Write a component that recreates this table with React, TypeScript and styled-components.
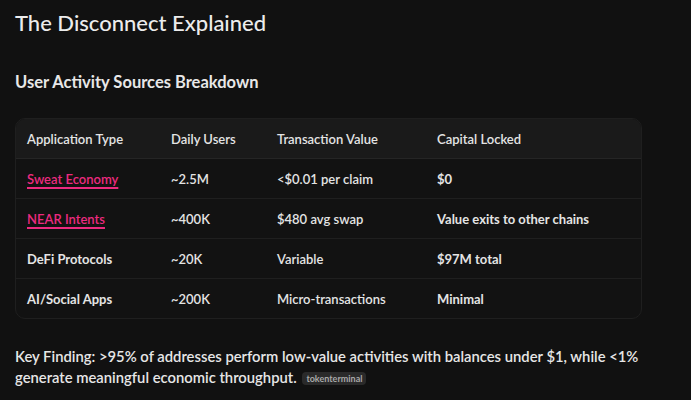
import React from "react";
import styled, { createGlobalStyle } from "styled-components";

const Global = createGlobalStyle`
  html, body { margin: 0; padding: 0; background: #111111; }
  body { font-family: Lato, "Noto Sans", sans-serif; color: #e6e6e6; }
`;

const Page = styled.div`
  padding: 8px 15px 0 15px;
  width: 691px;
  box-sizing: border-box;
`;

const Title = styled.h1`
  margin: 0;
  font-size: 22px;
  line-height: 30px;
  font-weight: 500;
  color: #ececec;
`;

const Subtitle = styled.h2`
  margin: 33px 0 0 0;
  font-size: 16.5px;
  line-height: 22px;
  font-weight: 700;
  color: #e8e8e8;
`;

const TableWrap = styled.div`
  margin-top: 25px;
  width: 625px;
  border: 1px solid #1f1f1f;
  border-radius: 10px;
  overflow: hidden;
  background: #121212;
`;

const Table = styled.table`
  width: 100%;
  border-collapse: collapse;
  font-size: 13px;
`;

const HeadCell = styled.th`
  text-align: left;
  font-weight: 600;
  color: #e4e4e4;
  background: #1a1a1a;
  height: 39px;
  padding: 0 0 0 11px;
  border-bottom: 1px solid #252525;
`;

const Cell = styled.td<{ $strong?: boolean }>`
  height: 39px;
  padding: 0 0 0 11px;
  font-weight: ${(p) => (p.$strong ? 700 : 600)};
  color: #e4e4e4;
  border-bottom: 1px solid #1f1f1f;
  tr:last-child & { border-bottom: none; }
`;

const Link = styled.a`
  color: #ec2a7f;
  text-decoration: underline;
  text-underline-offset: 3px;
  text-decoration-thickness: 1.5px;
  font-weight: 600;
`;

const Finding = styled.p`
  margin: 27px 0 0 0;
  font-size: 14.8px;
  line-height: 21px;
  font-weight: 600;
  color: #e6e6e6;
  width: 640px;
`;

const Tag = styled.span`
  display: inline-block;
  font-size: 9px;
  line-height: 13px;
  padding: 0 4px;
  border-radius: 4px;
  background: #2a2a2a;
  color: #a8a8a8;
  font-weight: 700;
  vertical-align: 1px;
  margin-left: 2px;
`;

type Row = { app: string; link?: boolean; users: string; value: string; locked: string };

const rows: Row[] = [
  { app: "Sweat Economy", link: true, users: "~2.5M", value: "<$0.01 per claim", locked: "$0" },
  { app: "NEAR Intents", link: true, users: "~400K", value: "$480 avg swap", locked: "Value exits to other chains" },
  { app: "DeFi Protocols", users: "~20K", value: "Variable", locked: "$97M total" },
  { app: "AI/Social Apps", users: "~200K", value: "Micro-transactions", locked: "Minimal" },
];

export default function App() {
  return (
    <>
      <Global />
      <Page>
        <Title>The Disconnect Explained</Title>
        <Subtitle>User Activity Sources Breakdown</Subtitle>
        <TableWrap>
          <Table>
            <colgroup>
              <col style={{ width: 144 }} />
              <col style={{ width: 106 }} />
              <col style={{ width: 160 }} />
              <col />
            </colgroup>
            <thead>
              <tr>
                <HeadCell>Application Type</HeadCell>
                <HeadCell>Daily Users</HeadCell>
                <HeadCell>Transaction Value</HeadCell>
                <HeadCell>Capital Locked</HeadCell>
              </tr>
            </thead>
            <tbody>
              {rows.map((r) => (
                <tr key={r.app}>
                  <Cell $strong={!r.link}>{r.link ? <Link href="#">{r.app}</Link> : r.app}</Cell>
                  <Cell>{r.users}</Cell>
                  <Cell>{r.value}</Cell>
                  <Cell $strong>{r.locked}</Cell>
                </tr>
              ))}
            </tbody>
          </Table>
        </TableWrap>
        <Finding>
          Key Finding: &gt;95% of addresses perform low-value activities with balances under $1, while &lt;1%
          generate meaningful economic throughput. <Tag>tokenterminal</Tag>
        </Finding>
      </Page>
    </>
  );
}
